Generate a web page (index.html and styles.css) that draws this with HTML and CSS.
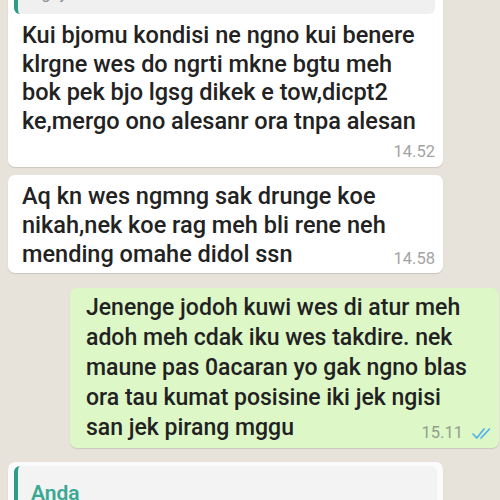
FILE: index.html
```html
<!DOCTYPE html>
<html lang="id">
<head>
    <meta charset="UTF-8">
    <meta name="viewport" content="width=device-width, initial-scale=1.0">
    <title>Chat</title>
    <link rel="stylesheet" href="styles.css">
</head>
<body>
    <div class="chat">
        <div class="msg in first">
            <div class="quote">
                <div class="quote-name">Anda</div>
                <div class="quote-text">Ngoyoko kon ken dadi dosa uwah</div>
            </div>
            <p class="text">Kui bjomu kondisi ne ngno kui benere<br>klrgne wes do ngrti mkne bgtu meh<br>bok pek bjo lgsg dikek e tow,dicpt2<br>ke,mergo ono alesanr ora tnpa alesan</p>
            <div class="meta">14.52</div>
        </div>

        <div class="msg in second">
            <p class="text">Aq kn wes ngmng sak drunge koe<br>nikah,nek koe rag meh bli rene neh</p>
            <div class="last">
                <p class="text">mending omahe didol ssn</p>
                <span class="meta">14.58</span>
            </div>
        </div>

        <div class="msg out">
            <p class="text">Jenenge jodoh kuwi wes di atur meh<br>adoh meh cdak iku wes takdire. nek<br>maune pas 0acaran yo gak ngno blas<br>ora tau kumat posisine iki jek ngisi</p>
            <div class="last">
                <p class="text">san jek pirang mggu</p>
                <span class="meta">15.11
                    <svg class="ticks" width="21" height="13" viewBox="0 0 21 13">
                        <path d="M1 7 L4.8 11 L12 2" />
                        <path d="M9 11 L17.5 2" />
                    </svg>
                </span>
            </div>
        </div>

        <div class="msg in reply">
            <div class="quote">
                <div class="quote-name">Anda</div>
            </div>
        </div>
    </div>
</body>
</html>
```

FILE: styles.css
```css
body {
    margin: 0;
    height: 500px;
    overflow: hidden;
    background-color: #e7e2da;
    font-family: Roboto, "Noto Sans", sans-serif;
    color: #222;
}
.chat {
    display: flex;
    flex-direction: column;
    align-items: flex-start;
    padding: 0 1px 0 8px;
}
.msg {
    box-sizing: border-box;
    background-color: #fff;
    border-radius: 7px;
    box-shadow: 0 1px 1px rgba(0, 0, 0, 0.12);
    padding: 6px 8px 6px 6px;
}
.in {
    width: 435px;
}
.text {
    margin: 0;
    font-size: 23.5px;
    font-weight: 500;
    line-height: 29px;
    white-space: nowrap;
}
.meta {
    font-size: 16.5px;
    line-height: 18px;
    color: #a3a3a3;
    text-align: right;
}
.last {
    display: flex;
    justify-content: space-between;
    align-items: flex-end;
}
.last .meta {
    margin-bottom: 1px;
}

/* quoted reply box */
.quote {
    background-color: #f0f0f0;
    border-left: 4px solid #2d9d89;
    border-radius: 6px;
    padding: 4px 8px 10px 12px;
}
.quote-name {
    font-size: 17px;
    font-weight: 600;
    line-height: 22px;
    color: #36a591;
}
.quote-text {
    font-size: 16px;
    line-height: 20px;
    color: #8a8a8a;
    white-space: nowrap;
    overflow: hidden;
}

.first {
    margin-top: -48px;
}
.first .text {
    margin: 7px 0 0 8px;
    line-height: 28.5px;
}
.first .meta {
    margin-top: 8px;
}

.second {
    margin-top: 8px;
    padding: 7px 8px 4px 14px;
}

.out {
    align-self: flex-end;
    width: 429px;
    margin-top: 15px;
    background-color: #ddf7c7;
    padding: 5px 6px 5px 16px;
}
.out .text {
    font-size: 23px;
    line-height: 30px;
}
.out .meta {
    color: #929e8b;
    display: flex;
    align-items: center;
    gap: 9px;
}
.ticks {
    fill: none;
    stroke: #4fb3e8;
    stroke-width: 1.7;
    stroke-linecap: round;
    stroke-linejoin: round;
}

.reply {
    margin-top: 14px;
    padding: 4px 6px;
    background-color: #fbfbfb;
}
.reply .quote {
    background-color: #f3f3f3;
    padding: 16px 8px 20px 13px;
}
.reply .quote-name {
    font-size: 21px;
    color: #3aa893;
}
```
